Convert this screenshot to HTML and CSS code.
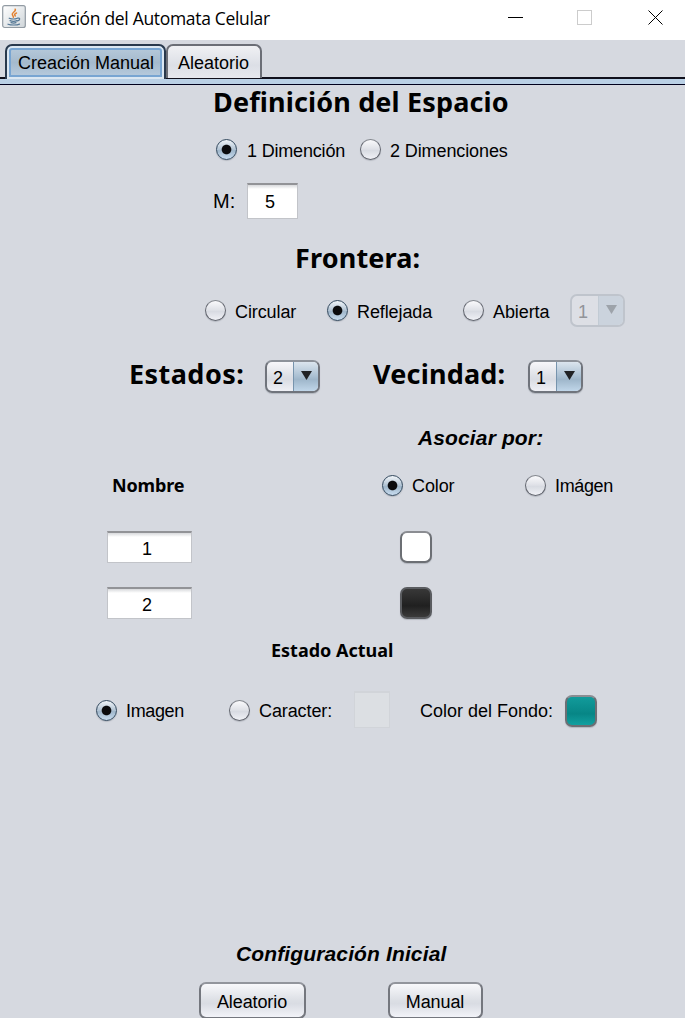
FILE: index.html
```html
<!DOCTYPE html>
<html lang="es">
<head>
<meta charset="utf-8">
<title>Creación del Automata Celular</title>
<link rel="stylesheet" href="styles.css">
</head>
<body>
<header class="titlebar">
  <svg class="java" width="24" height="24" viewBox="0 0 24 24">
    <defs><linearGradient id="jg" x1="0" y1="0" x2="1" y2="1"><stop offset="0" stop-color="#fff"/><stop offset="1" stop-color="#cfd5d9"/></linearGradient></defs>
    <rect x=".7" y=".7" width="22.6" height="21.8" rx="2" fill="url(#jg)" stroke="#929ba3" stroke-width="1.2"/>
    <g fill="none" stroke-linecap="round">
      <path d="M13.2 4.2c1.4 2.2-3.6 3.2-2.9 5.4.3 1 1.3 1.5 1 2.7M14.5 8c-2.5 1-2 2-1.2 3" stroke="#e38232" stroke-width="1.5"/>
      <path d="M7.2 13.2c2 .8 6.2.8 8.2 0M8 15.6c2 .8 5 .8 7 0M9 17.6c2 .6 3.5.6 5 0M15.8 13.2c2.8-.6 2.2 2.2-.2 2.6M6 19.2c3 1.1 9 1.1 11.5-.1" stroke="#557896" stroke-width="1.2"/>
    </g>
  </svg>
  <span class="caption">Creación del Automata Celular</span>
  <svg class="controls" width="160" height="20" viewBox="0 0 160 20" fill="none" shape-rendering="crispEdges">
    <path d="M3 9.5h15" stroke="#000"/>
    <rect x="72.5" y="2.5" width="14" height="14" stroke="#ccc"/>
    <path d="M143.5 2.5l14 14M157.5 2.5l-14 14" stroke="#000" shape-rendering="auto"/>
  </svg>
</header>
<nav class="tabs">
  <div class="tab active"><span>Creación Manual</span></div>
  <div class="tab"><span>Aleatorio</span></div>
</nav>
<div class="band"></div>
<main>
  <div class="row r-title"><h1 class="espacio">Definición del Espacio</h1></div>
  <div class="row r-dim">
    <label class="radio on dim1"><i></i><span>1 Dimención</span></label>
    <label class="radio"><i></i><span>2 Dimenciones</span></label>
  </div>
  <div class="row r-size"><span class="m">M:</span><div class="field size">5</div></div>
  <div class="row r-frontera"><h1 class="frontera">Frontera:</h1></div>
  <div class="row r-border">
    <label class="radio circular"><i></i><span>Circular</span></label>
    <label class="radio on reflejada"><i></i><span>Reflejada</span></label>
    <label class="radio abierta"><i></i><span>Abierta</span></label>
    <div class="combo disabled"><span>1</span><b><svg width="12" height="10"><path d="M0 0h11l-5.5 9z"/></svg></b></div>
  </div>
  <div class="row r-states">
    <h1 class="estados">Estados:</h1>
    <div class="combo"><span>2</span><b><svg width="12" height="10"><path d="M0 0h11l-5.5 9z"/></svg></b></div>
    <h1 class="vecindad">Vecindad:</h1>
    <div class="combo"><span>1</span><b><svg width="12" height="10"><path d="M0 0h11l-5.5 9z"/></svg></b></div>
  </div>
  <div class="row r-asociar"><h2 class="asociar">Asociar por:</h2></div>
  <div class="row r-head">
    <h3 class="nombre">Nombre</h3>
    <label class="radio on color"><i></i><span>Color</span></label>
    <label class="radio image"><i></i><span>Imágen</span></label>
  </div>
  <div class="row r-one"><div class="field name">1</div><div class="swatch white"></div></div>
  <div class="row r-two"><div class="field name">2</div><div class="swatch black"></div></div>
  <div class="row r-actual"><h3 class="actual">Estado Actual</h3></div>
  <div class="row r-kind">
    <label class="radio on imagen"><i></i><span>Imagen</span></label>
    <label class="radio caracter"><i></i><span>Caracter:</span></label>
    <div class="field char"></div>
    <span class="fondo">Color del Fondo:</span>
    <div class="swatch teal"></div>
  </div>
  <div class="row r-config"><h2 class="config">Configuración Inicial</h2></div>
  <div class="row r-buttons"><button class="btn random">Aleatorio</button><button class="btn manual">Manual</button></div>
</main>
</body>
</html>
```

FILE: styles.css
```css
* { box-sizing: border-box; }
body {
  margin: 0;
  width: 685px;
  height: 1018px;
  overflow: hidden;
  background: #d6d9e0;
  color: #000;
  font: 18px/22px "Liberation Sans", Arial, sans-serif;
  white-space: nowrap;
}
h1, h2, h3 { margin: 0; flex: none; }
h1 { font: bold 27px/34px "Noto Sans", sans-serif; letter-spacing: .15px; }
h2 { font: italic bold 21px/24px "Liberation Sans", Arial, sans-serif; letter-spacing: .13px; }
h3 { font: bold 18px/22px "Noto Sans", sans-serif; }

.titlebar { display: flex; height: 40px; background: #fff; padding: 5px 0 0 2px; }
.java { flex: none; }
.caption { flex: none; width: 477px; padding: 2px 0 0 5px; font: 17.5px/23px "Open Sans", sans-serif; letter-spacing: -.32px; }
.controls { flex: none; margin: 3px 0 0 2px; }

.tabs { display: flex; height: 39px; padding: 4px 0 0 5px; border-bottom: 2px solid #10101c; }
.tab {
  width: 96px;
  height: 34px;
  padding: 6px 0 0 10px;
  border: 2px solid #6b6e76;
  border-bottom: 0;
  border-radius: 7px 7px 0 0;
  background: linear-gradient(#f0f1f4, #dcdfe6 60%, #e6e8ee);
}
.tab.active {
  width: 161px;
  height: 35px;
  padding: 6px 0 0 11px;
  border-color: #29394d;
  background: linear-gradient(#b8cbdc, #a5bacd 50%, #b9cde0);
  box-shadow: inset 0 0 0 2px #dbe7f2, inset 0 0 0 4px #78a5d2;
}
.band { height: 6px; background: #bad0e5; border-bottom: 1px solid #00001c; }

.row { display: flex; align-items: center; }
.r-title { height: 34px; padding-left: 213px; }
.r-dim { height: 61px; padding-left: 216px; }
.r-size { height: 42px; padding-left: 213px; }
.r-frontera { height: 71px; padding-left: 295px; }
.r-border { height: 35px; padding-left: 205px; }
.r-states { height: 96px; padding-left: 129px; }
.r-asociar { height: 28px; padding-left: 418px; }
.r-head { height: 66px; padding-left: 112px; }
.r-one { height: 58px; padding-left: 107px; }
.r-two { height: 53px; padding-left: 107px; }
.r-actual { height: 42px; padding-left: 271px; }
.r-kind { height: 78px; padding-left: 96px; }
.r-config { height: 24px; margin-top: 193px; padding-left: 236px; }
.r-buttons { height: 36px; margin-top: 16px; padding-left: 199px; }

.radio { display: flex; align-items: center; gap: 9px; flex: none; letter-spacing: -.1px; }
.radio span { padding-top: 2px; }
.radio.dim1 { gap: 10px; letter-spacing: -.18px; }
.radio.image, .radio.imagen { letter-spacing: -.35px; }
.radio i {
  width: 21px;
  height: 21px;
  border: 1.5px solid #63666f;
  border-top-color: #85888f;
  border-radius: 50%;
  background: linear-gradient(#fafafc, #dfe1e7 48%, #d8dbe2 55%, #f0f1f6);
  box-shadow: 0 1px 1px #b4b8c0;
}
.radio.on i {
  border-color: #33495e;
  background: radial-gradient(circle, #0b0b0d 0 4.3px, transparent 5.3px), linear-gradient(#f1f5f9, #b4c5d5 48%, #a0b7cb 56%, #c8dcef);
}
.dim1 { width: 144px; }
.circular { width: 122px; }
.reflejada { width: 136px; }
.abierta { width: 107px; }
.color { width: 143px; }
.imagen { width: 133px; }
.caracter { width: 125px; }

.m { width: 34px; font-size: 20px; }
.field {
  flex: none;
  display: flex;
  align-items: center;
  justify-content: center;
  padding-top: 3px;
  border: 1px solid #c2c4c9;
  border-top: 2px solid #929397;
  background: linear-gradient(#d8d9dc, #fff 4px);
}
.size { width: 51px; height: 36px; padding: 1px 5px 0 0; }
.name { width: 85px; height: 32px; padding-right: 5px; }
.char { width: 36px; height: 37px; margin-bottom: 2px; border-color: #d1d4d9; background: #dcdfe3; }

.combo {
  display: flex;
  flex: none;
  width: 55px;
  height: 33px;
  overflow: hidden;
  border: 2px solid #70747c;
  border-top-color: #8d929a;
  border-radius: 7px;
  background: linear-gradient(#f7f7fa, #dcdfe5 50%, #d9dce3 60%, #eff0f5);
  box-shadow: 0 1px 1px #b3b8c0;
}
.combo span { width: 26px; padding: 5px 0 0 6px; }
.combo b { flex: 1; padding: 9px 0 0 7px; border-left: 1px solid #7794ad; background: linear-gradient(#dbe5ee, #a9bfd2 50%, #9eb6ca 60%, #c0d6e9); }
.combo svg { display: block; fill: #202225; }
.combo.disabled { margin-bottom: 1px; border-color: #bfc4cc; color: #929499; background: #dddfe5; box-shadow: none; }
.disabled b { border-left-color: #c2cbd4; background: #cbd3dd; }
.disabled svg { fill: #9da3aa; }
.r-states h1 { margin-bottom: 4px; }
.r-states .estados { width: 136px; letter-spacing: .45px; }
.r-states .vecindad { width: 155px; margin-left: 53px; letter-spacing: .2px; }
.nombre { width: 270px; letter-spacing: -.15px; }

.swatch { flex: none; width: 32px; height: 32px; border: 2px solid #6c6f74; border-top-color: #8b8d92; border-radius: 7px; box-shadow: 0 1px 1px #b3b7bf; }
.r-one .swatch, .r-two .swatch { margin-left: 208px; }
.white { background: #fff; }
.black { border-color: #5a5c60; background: linear-gradient(#383838, #202020 60%, #3b3b3b); }
.teal { margin-top: 2px; background: linear-gradient(#129b9b, #078686 60%, #12a0a0); }
.fondo { width: 145px; margin-left: 30px; padding-top: 2px; }

.btn {
  height: 37px;
  padding: 3px 1px 0 0;
  border: 2px solid #74777e;
  border-top-color: #92959c;
  border-radius: 7px;
  background: linear-gradient(#f8f8fb, #dcdfe5 50%, #d9dce3 60%, #f2f3f8);
  font: inherit;
  letter-spacing: -.1px;
}
.random { width: 107px; }
.manual { width: 95px; margin-left: 82px; }
```
